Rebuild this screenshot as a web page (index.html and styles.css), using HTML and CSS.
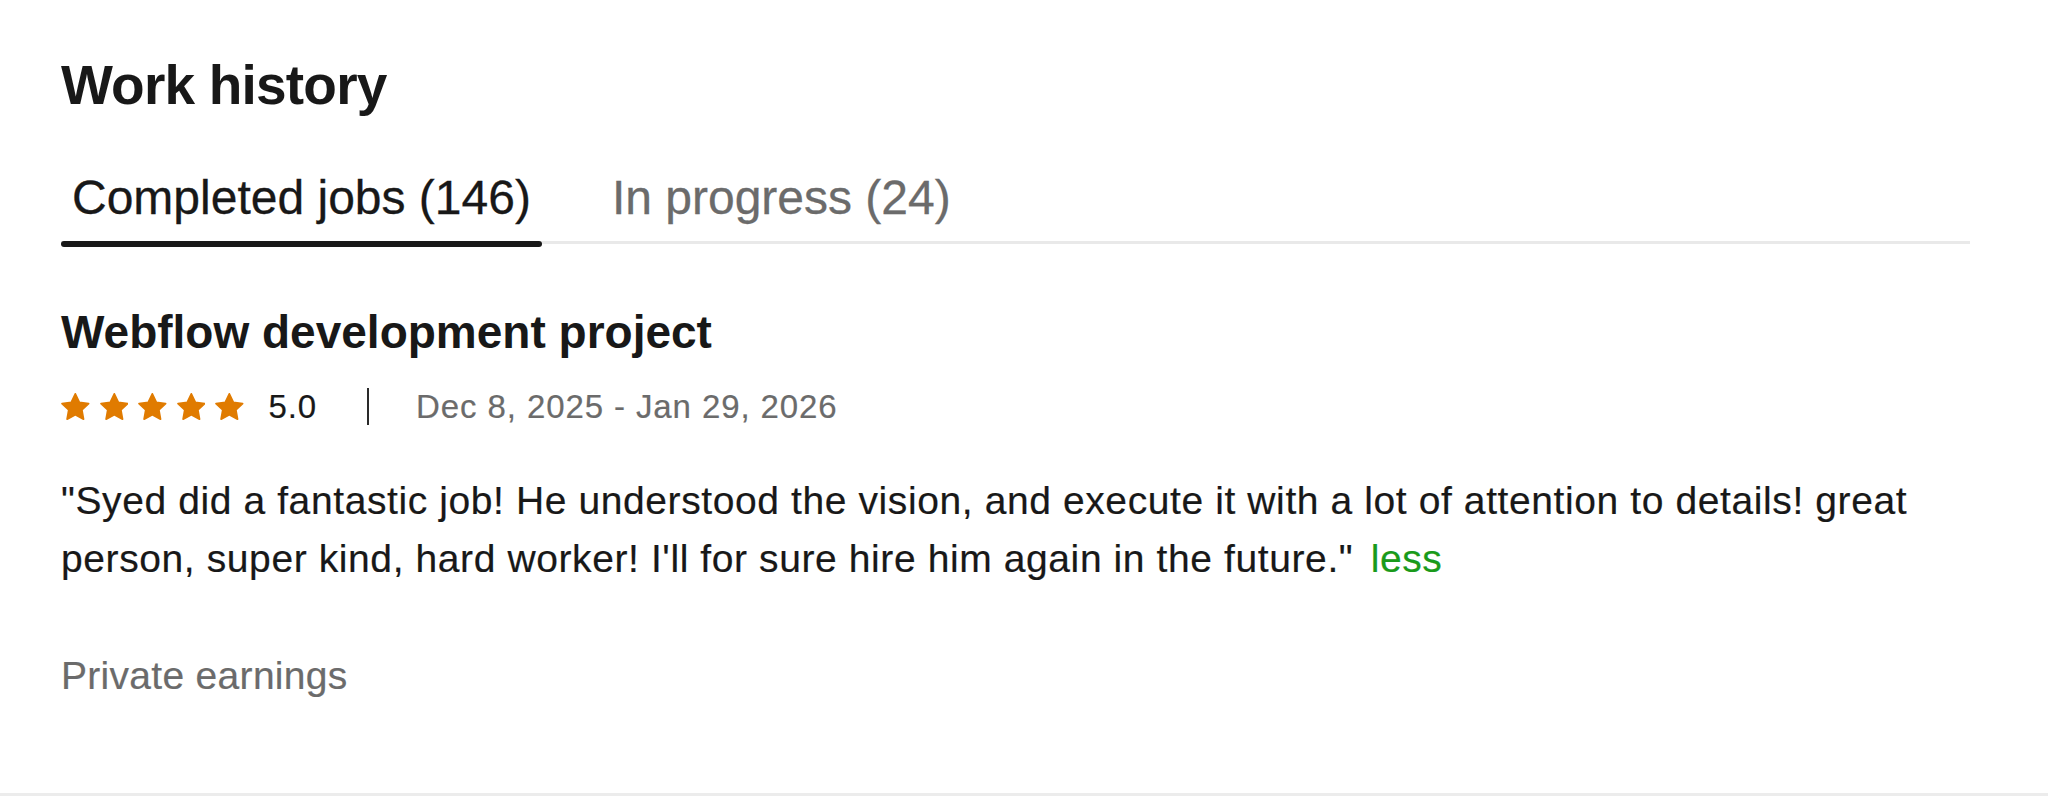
FILE: index.html
```html
<!DOCTYPE html>
<html lang="en">
<head>
<meta charset="utf-8">
<title>Work history</title>
<link rel="stylesheet" href="styles.css">
</head>
<body>
<section class="work-history">
  <div class="inner">
    <h2 class="section-title">Work history</h2>
    <div class="tabs">
      <div class="tab active">Completed jobs (146)</div>
      <div class="tab">In progress (24)</div>
    </div>
    <article class="job">
      <h3 class="job-title">Webflow development project</h3>
      <div class="rating-row">
        <div class="stars">
          <svg class="star" viewBox="2 2 19.9 18.9"><path d="M12 2.6l2.85 5.9 6.45.9-4.7 4.5 1.15 6.4L12 17.2l-5.75 3.1 1.15-6.4-4.7-4.5 6.45-.9z"/></svg>
          <svg class="star" viewBox="2 2 19.9 18.9"><path d="M12 2.6l2.85 5.9 6.45.9-4.7 4.5 1.15 6.4L12 17.2l-5.75 3.1 1.15-6.4-4.7-4.5 6.45-.9z"/></svg>
          <svg class="star" viewBox="2 2 19.9 18.9"><path d="M12 2.6l2.85 5.9 6.45.9-4.7 4.5 1.15 6.4L12 17.2l-5.75 3.1 1.15-6.4-4.7-4.5 6.45-.9z"/></svg>
          <svg class="star" viewBox="2 2 19.9 18.9"><path d="M12 2.6l2.85 5.9 6.45.9-4.7 4.5 1.15 6.4L12 17.2l-5.75 3.1 1.15-6.4-4.7-4.5 6.45-.9z"/></svg>
          <svg class="star" viewBox="2 2 19.9 18.9"><path d="M12 2.6l2.85 5.9 6.45.9-4.7 4.5 1.15 6.4L12 17.2l-5.75 3.1 1.15-6.4-4.7-4.5 6.45-.9z"/></svg>
        </div>
        <span class="score">5.0</span>
        <span class="divider"></span>
        <span class="dates">Dec 8, 2025 - Jan 29, 2026</span>
      </div>
      <p class="feedback">"Syed did a fantastic job! He understood the vision, and execute it with a lot of attention to details! great person, super kind, hard worker! I'll for sure hire him again in the future." <a class="less" href="#">less</a></p>
      <p class="earnings">Private earnings</p>
    </article>
  </div>
</section>
</body>
</html>
```
FILE: styles.css
```css
* {
  box-sizing: border-box;
}

html, body {
  margin: 0;
  padding: 0;
  background: #ffffff;
}

body {
  font-family: "Liberation Sans", Arial, Helvetica, sans-serif;
  color: #181818;
}

.work-history {
  width: 100%;
  height: 796px;
  border-bottom: 3px solid #ececec;
}

.inner {
  width: 1970px;
  padding: 53px 0 0 61px;
}

.section-title {
  margin: 0;
  font-size: 55px;
  line-height: 64px;
  font-weight: 700;
  letter-spacing: -0.8px;
  color: #181818;
}

.tabs {
  display: flex;
  gap: 59px;
  margin-top: 53px;
  border-bottom: 3px solid #e9e9e9;
}

.tab {
  position: relative;
  padding: 0 11px 15px;
  font-size: 48px;
  line-height: 56px;
  color: #6b6b6b;
  -webkit-text-stroke: 0.3px currentColor;
}

.tab.active {
  color: #181818;
}

.tab.active::after {
  content: "";
  position: absolute;
  left: 0;
  right: 0;
  bottom: -6px;
  height: 6px;
  border-radius: 3px;
  background: #181818;
}

.job-title {
  margin: 61px 0 0;
  font-size: 46px;
  line-height: 54px;
  font-weight: 700;
  color: #181818;
}

.rating-row {
  display: flex;
  align-items: center;
  height: 37px;
  margin-top: 29px;
  font-size: 33px;
  line-height: 37px;
  letter-spacing: 0.9px;
  -webkit-text-stroke: 0.2px currentColor;
}

.stars {
  display: flex;
  gap: 10px;
}

.star {
  width: 28.5px;
  height: 27px;
  display: block;
}

.star path {
  fill: #e07b00;
  stroke: #e07b00;
  stroke-width: 1.2;
  stroke-linejoin: round;
}

.score {
  margin-left: 25px;
  color: #181818;
}

.divider {
  width: 2px;
  height: 37px;
  margin-left: 50px;
  background: #2a2a2a;
}

.dates {
  margin-left: 47px;
  color: #6b6b6b;
}

.feedback {
  margin: 47px 0 0;
  font-size: 39px;
  line-height: 58px;
  letter-spacing: 0.6px;
  color: #181818;
  -webkit-text-stroke: 0.2px currentColor;
}

.less {
  margin-left: 6px;
  color: #1a9a1a;
  text-decoration: none;
}

.earnings {
  margin: 59px 0 0;
  font-size: 39px;
  line-height: 58px;
  letter-spacing: 0.3px;
  color: #6b6b6b;
  -webkit-text-stroke: 0.2px currentColor;
}
```
